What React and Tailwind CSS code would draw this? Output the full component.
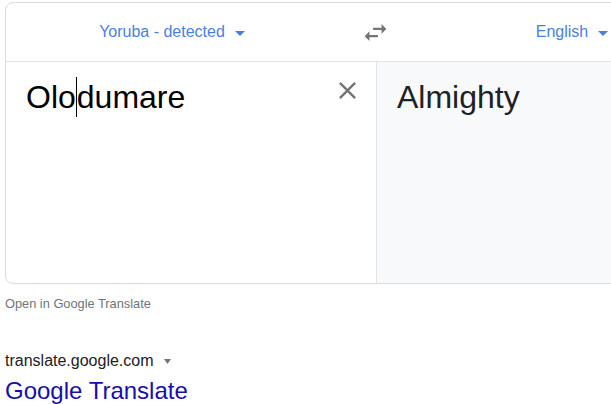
import React from "react";

const Caret = ({ className }) => (
  <svg width="10" height="5" viewBox="0 0 10 5" className={className}>
    <polygon points="0,0 10,0 5,5" fill="currentColor" />
  </svg>
);

const SwapIcon = () => (
  <svg width="29" height="29" viewBox="0 0 24 24" fill="#757575">
    <path d="M6.99 11L3 15l3.99 4v-3H14v-2H6.99v-3zM21 9l-4-4v3h-7v2h7v3l4-4z" />
  </svg>
);

const CloseIcon = () => (
  <svg width="29" height="29" viewBox="0 0 24 24" fill="#757575">
    <path d="M19 6.41L17.59 5 12 10.59 6.41 5 5 6.41 10.59 12 5 17.59 6.41 19 12 13.41 17.59 19 19 17.59 13.41 12z" />
  </svg>
);

export default function App() {
  return (
    <div
      className="w-[611px] h-[404px] overflow-hidden bg-white pt-[2px] pl-[5px]"
      style={{ fontFamily: '"Liberation Sans", Arial, sans-serif' }}
    >
      {/* translate card */}
      <div className="w-[742px] h-[282px] border border-[#dadce0] rounded-lg flex flex-col overflow-hidden">
        <div className="h-[59px] shrink-0 border-b border-[#e3e3e3] flex items-center">
          <div className="w-[346px] shrink-0 flex justify-center items-center pr-[14px] text-[16px] text-[#4a7fe0]">
            <span>Yoruba - detected</span>
            <Caret className="ml-[10px] mt-[2px]" />
          </div>
          <div className="w-[48px] shrink-0 flex justify-center items-center pr-[2px]">
            <SwapIcon />
          </div>
          <div className="flex-1 flex justify-center items-center pr-[2px] text-[16px] text-[#4a7fe0]">
            <span>English</span>
            <Caret className="ml-[10px] mt-[2px]" />
          </div>
        </div>

        <div className="flex flex-1">
          <div className="w-[371px] border-r border-[#e3e3e3] flex items-start">
            <div className="flex-1 pl-[20px] pt-[15px] text-[32px] leading-[40px] text-black">
              Olo
              <span className="inline-block w-px h-[40px] bg-black align-top"></span>
              dumare
            </div>
            <div className="pt-[14px] pr-[14px]">
              <CloseIcon />
            </div>
          </div>
          <div className="flex-1 bg-[#f8f9fa] pl-[20px] pt-[15px] text-[32px] leading-[40px] text-[#202124]">
            Almighty
          </div>
        </div>
      </div>

      <div className="mt-[12px] text-[12.8px] leading-[16px] text-[#70757a]">Open in Google Translate</div>

      <div className="mt-[39px] flex items-center text-[16px] leading-[20px] text-[#202124]">
        <span>translate.google.com</span>
        <svg width="7" height="5" viewBox="0 0 7 5" className="ml-[10px]">
          <polygon points="0,0 7,0 3.5,5" fill="#70757a" />
        </svg>
      </div>
      <div className="mt-[6px] text-[24px] leading-[28px] text-[#1a0dab]">Google Translate</div>
    </div>
  );
}
